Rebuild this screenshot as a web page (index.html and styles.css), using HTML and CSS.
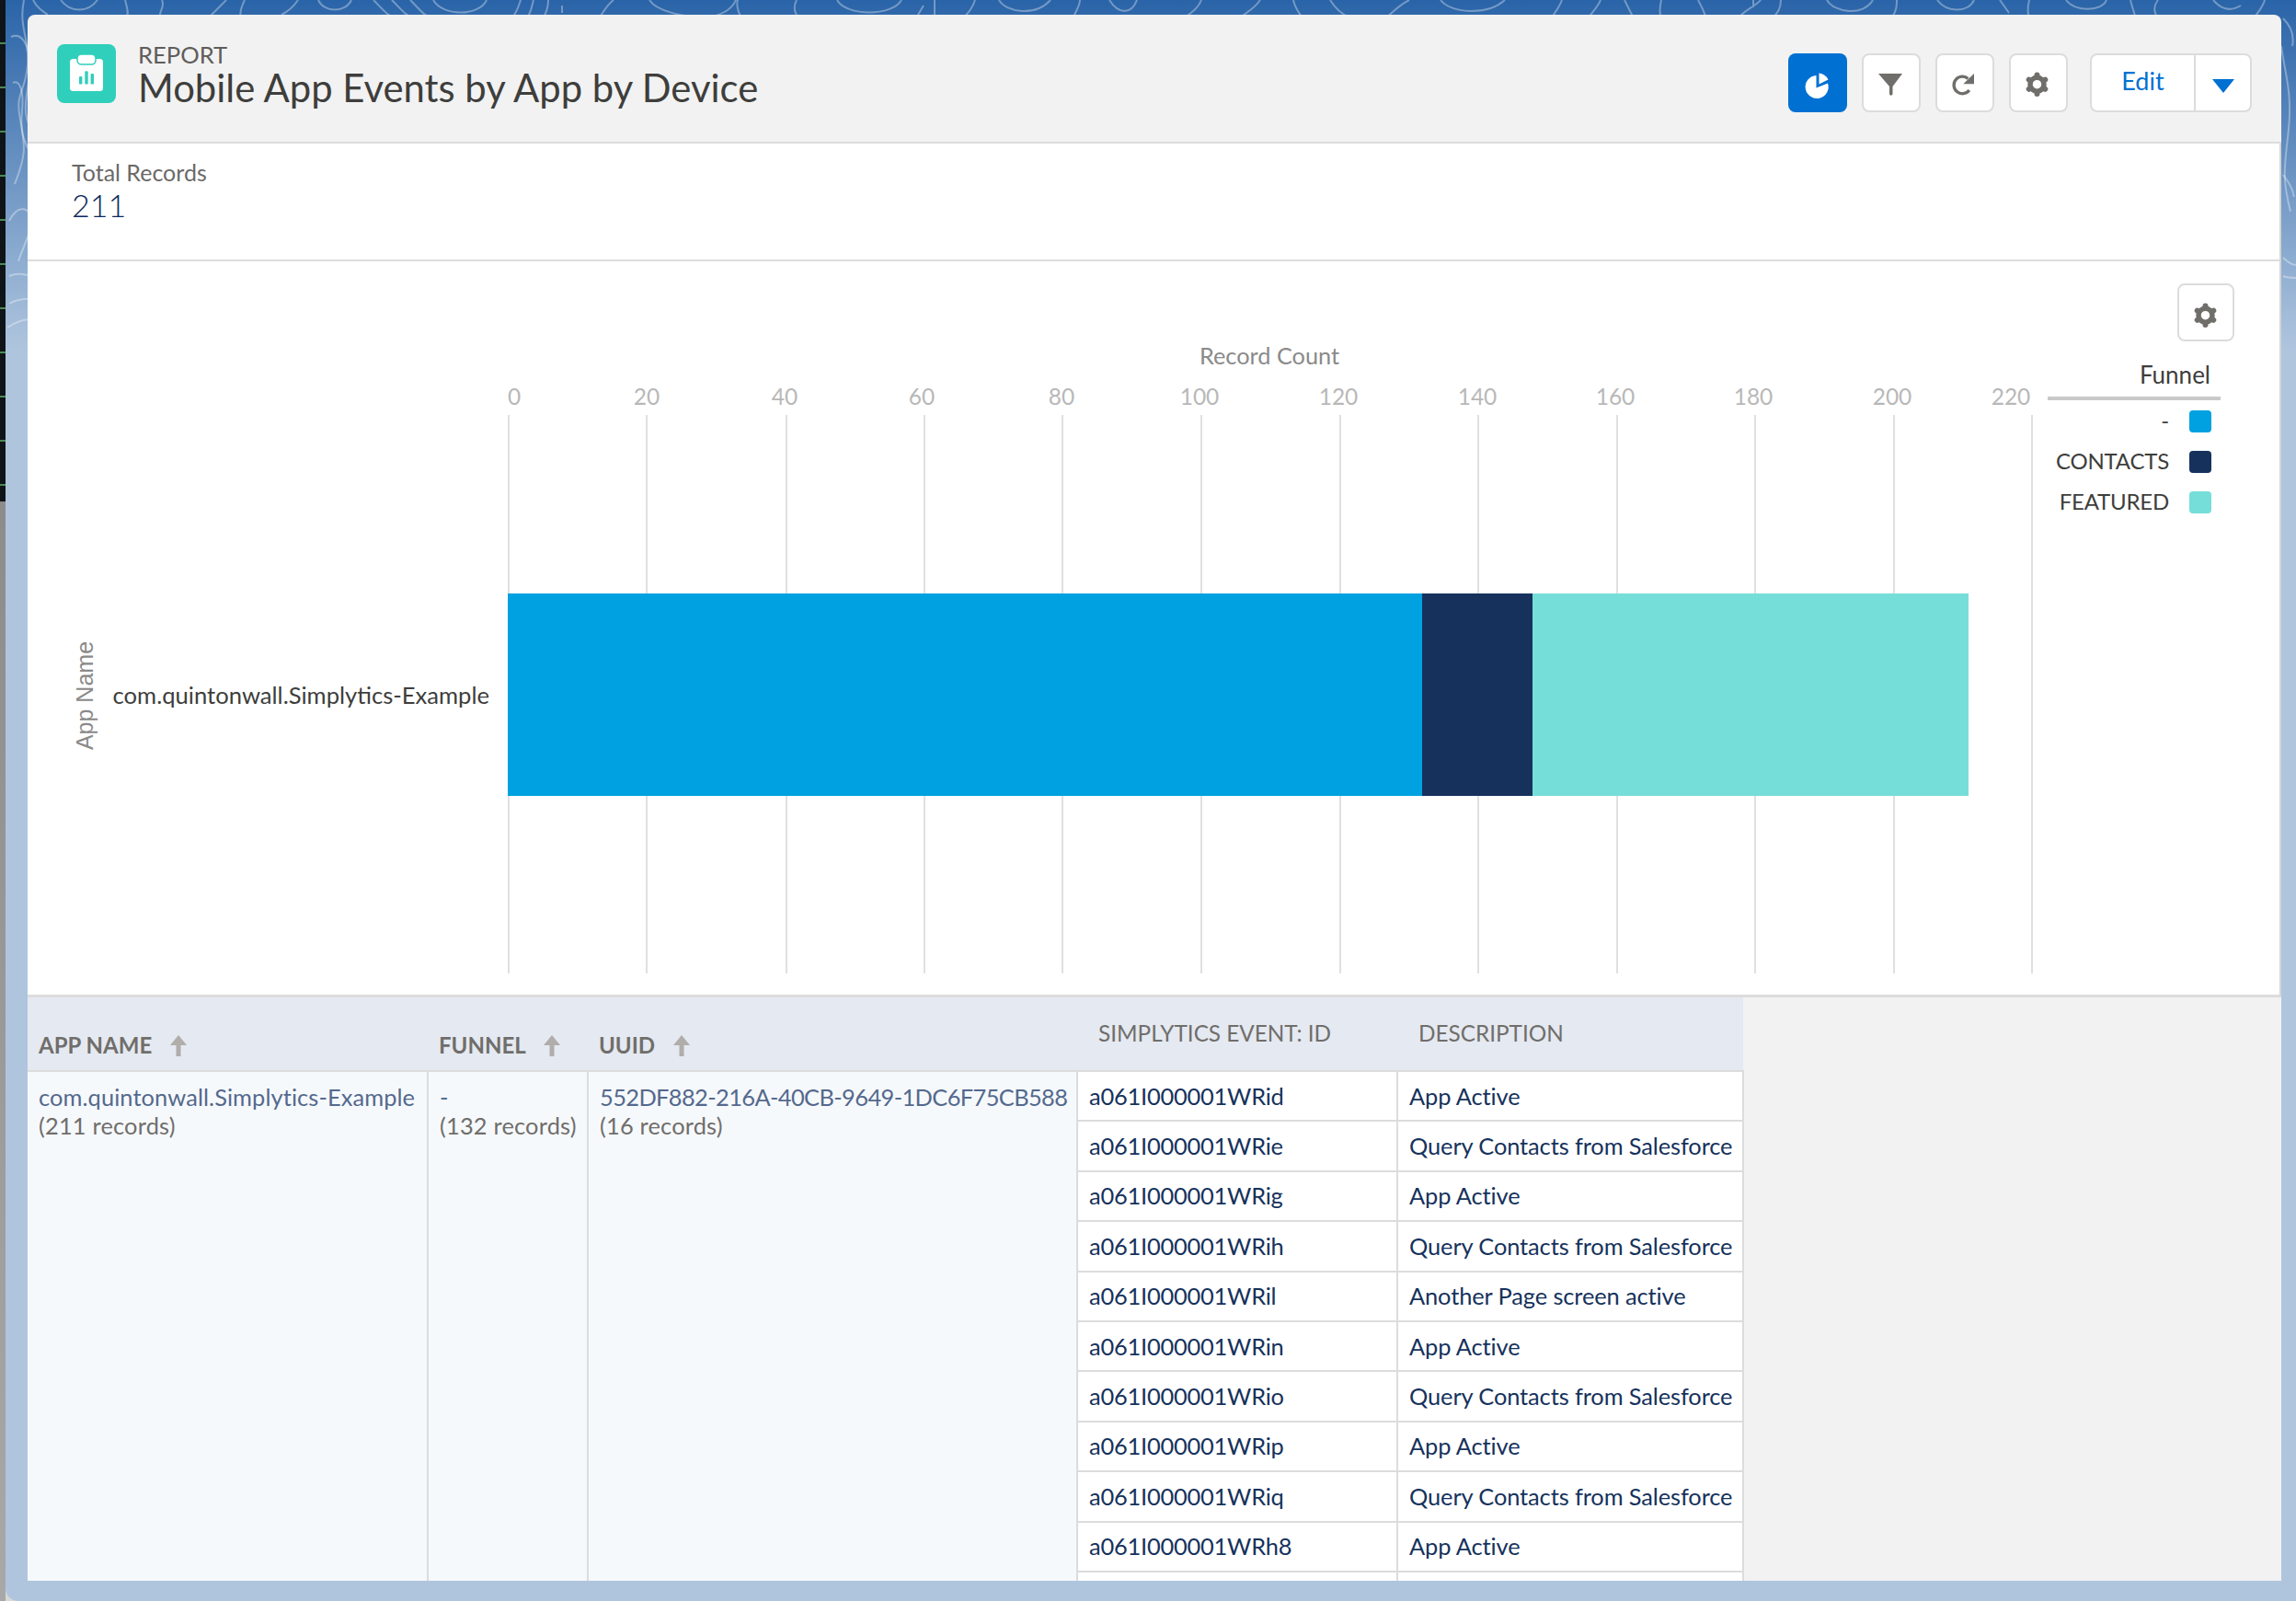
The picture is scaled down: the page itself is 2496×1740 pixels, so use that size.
FILE: index.html
```html
<!DOCTYPE html>
<html lang="en">
<head>
  <meta charset="UTF-8" />
  <title>Mobile App Events by App by Device</title>
  <link rel="stylesheet" href="styles.css">
</head>
<body>
  <div class="dock"></div>
  <div class="window">
    <svg class="contours" viewBox="0 0 2490 400" width="2490" height="400" fill="none" stroke="#fff" stroke-opacity=".34" stroke-width="2">
      <path d="M20 0c-6 30 6 40 4 70s-14 30-8 60 6 40-6 70"/>
      <path d="M6 40c14-6 22 14 20 40s-12 44 8 70"/>
      <path d="M8 90c8-4 12 10 10 30s0 30 8 44"/>
      <path d="M4 240c10-20 24-14 24 0s-10 30-14 44"/>
      <path d="M4 300c14-6 24 2 30 0M4 330c14-8 24-4 30-6M2 356c12-8 22-10 30-8"/>
      <path d="M30 0c4 8 10 12 16 16M60 0c10 14 30 14 40 0M130 0c2 8 4 12 2 20M170 0c4 8-4 12-2 20M220 20 240 0M260 0c-4 8-6 14-4 20M300 16c8-4 14-10 18-16M340 0c6 14 30 14 36 0"/>
      <path d="M400 0c10 10 16 18 22 18M420 0c10 10 16 18 22 18M440 0c10 10 16 18 20 18"/>
      <path d="M465 0c10 18 50 18 58 0M550 20c6-6 8-14 10-20M566 20c6-6 6-14 8-20M584 20c4-6 6-14 6-20M605 6v8"/>
      <path d="M645 20c6-8 8-14 16-20M700 0c10 16 50 18 60 20M760 20c20-4 30-10 34-20M800 20c-4-8-6-14-4-20"/>
      <path d="M860 16c-4-6-2-12 0-16M904 0c10 18 60 18 70 0M992 16l6-10M1010 0v20M1040 20c8-6 12-14 14-20M1080 0c8 14 40 18 56 0M1160 20c4-8 8-14 8-20"/>
      <path d="M1200 0c10 16 24 16 30 0M1280 20c10-6 18-14 20-20M1340 20c10-6 20-14 24-20M1400 0c2 10 8 16 10 20M1440 0c6 10 14 16 22 20"/>
      <path d="M1500 20c10-8 14-14 26-20M1560 0c10 14 50 18 70 0M1680 20c6-8 10-14 12-20M1720 20c6-8 12-14 14-20M1760 0l10 20M1800 0c-2 10-2 14 0 20M1840 0c4 8 8 14 8 20"/>
      <path d="M1884 20c4-8 20-14 24-20M1900 0v8M1920 20c8-6 10-14 10-20M1980 0c8 14 40 18 50 0M2050 20c6-8 6-14 6-20"/>
      <path d="M2100 0c10 14 34 14 40 0M2168 0l10 14M2200 0c-2 8-2 14 0 20M2240 0c10 14 40 12 44 0M2310 0c2 8 4 14 6 20M2340 0c-6 8-4 14 0 20M2400 0c10 12 20 12 30 6M2444 20c4-6 10-12 12-20"/>
      <path d="M2474 50c4 30 12 50 8 90s-8 50 2 90"/>
      <path d="M2476 20c10 10 12 20 10 30M2476 190c6 8 10 14 12 24M2476 280c4 4 10 8 14 8M2476 300c4 2 10 2 14 2"/>
    </svg>

    <main class="card">
      <header class="page-head">
        <div class="head-title">
          <svg class="report-icon" viewBox="0 0 64 64" width="64" height="64">
            <rect width="64" height="64" rx="8" fill="#2fcfbb"/>
            <rect x="14" y="16" width="36" height="35" rx="3.5" fill="#fff"/>
            <rect x="22" y="11" width="20" height="11" rx="4.5" fill="#fff" stroke="#2fcfbb" stroke-width="1.5"/>
            <rect x="24" y="35" width="3.4" height="8.6" rx="1.2" fill="#2fcfbb"/>
            <rect x="30.3" y="29.3" width="3.4" height="14.3" rx="1.2" fill="#2fcfbb"/>
            <rect x="36.6" y="32" width="3.4" height="11.6" rx="1.2" fill="#2fcfbb"/>
          </svg>
          <div>
            <div class="eyebrow">REPORT</div>
            <h1>Mobile App Events by App by Device</h1>
          </div>
        </div>
        <div class="head-actions">
          <button class="icon-btn active">
            <svg viewBox="0 0 64 64" width="64" height="64" fill="#fff">
              <path d="M30.5 24V37.5L43 32.5A12.5 12.5 0 1 1 30.5 24Z"/>
              <path d="M33.5 21.5A13 13 0 0 1 43.5 28.5L33.5 33.5Z"/>
            </svg>
          </button>
          <button class="icon-btn">
            <svg viewBox="2 2 60 60" width="60" height="60" fill="#706e6b">
              <path d="M18 22H44L33.5 36V44a1.5 1.5 0 0 1-3.5 0V36Z"/>
            </svg>
          </button>
          <button class="icon-btn">
            <svg viewBox="2 2 60 60" width="60" height="60">
              <path d="M36.8 40.1A9.3 9.3 0 1 1 35.5 27.5" fill="none" stroke="#706e6b" stroke-width="3.3"/>
              <path d="M42 22V33.3H30.3Z" fill="#706e6b"/>
            </svg>
          </button>
          <button class="icon-btn">
            <svg viewBox="2 2 60 60" width="60" height="60"><use href="#gear" x="0" y="0" width="64" height="64"/></svg>
          </button>
          <div class="split-btn">
            <button class="edit-btn">Edit</button>
            <button class="caret-btn">
              <svg viewBox="0 0 24 16" width="24" height="16"><path d="M0 0H24L12 15Z" fill="#0070d2"/></svg>
            </button>
          </div>
        </div>
      </header>

      <section class="stats">
        <div class="stat-label">Total Records</div>
        <div class="stat-value">211</div>
      </section>

      <section class="chart">
        <svg class="plot" viewBox="30 284 2190 796" width="2190" height="796">
          <g stroke="#e0e0e0" stroke-width="2">
            <path d="M553 451V1058M703 451V1058M855 451V1058M1005 451V1058M1155 451V1058M1306 451V1058M1457 451V1058M1607 451V1058M1758 451V1058M1908 451V1058M2059 451V1058M2209 451V1058"/>
          </g>
          <rect x="552" y="645" width="994" height="220" fill="#00a1e0"/>
          <rect x="1546" y="645" width="120" height="220" fill="#16325c"/>
          <rect x="1666" y="645" width="474" height="220" fill="#76ded9"/>
          <text class="axis-title" x="1380" y="396">Record Count</text>
          <g class="tick">
            <text x="559" y="440">0</text>
            <text x="703" y="440">20</text>
            <text x="853" y="440">40</text>
            <text x="1002" y="440">60</text>
            <text x="1154" y="440">80</text>
            <text x="1304" y="440">100</text>
            <text x="1455" y="440">120</text>
            <text x="1606" y="440">140</text>
            <text x="1756" y="440">160</text>
            <text x="1906" y="440">180</text>
            <text x="2057" y="440">200</text>
            <text x="2186" y="440">220</text>
          </g>
          <text class="cat-title" transform="translate(101 756) rotate(-90)">App Name</text>
          <text class="cat-label" x="532" y="765">com.quintonwall.Simplytics-Example</text>
        </svg>
        <aside class="chart-side">
          <button class="icon-btn chart-gear">
            <svg viewBox="2 2 58 58" width="58" height="58"><use href="#gear" x="0" y="0" width="64" height="64"/></svg>
          </button>
          <div class="legend-title">Funnel</div>
          <ul class="legend">
            <li>- <span class="swatch swatch-none"></span></li>
            <li>CONTACTS <span class="swatch swatch-contacts"></span></li>
            <li>FEATURED <span class="swatch swatch-featured"></span></li>
          </ul>
        </aside>
      </section>

      <section class="results">
        <table>
          <colgroup>
            <col class="c-app"><col class="c-funnel"><col class="c-uuid"><col class="c-id"><col class="c-desc">
          </colgroup>
          <thead>
            <tr>
              <th class="group">APP NAME <svg class="sort" viewBox="0 0 18 23" width="18" height="23"><path d="M9 0 18 11H11.5V23H6.5V11H0Z"/></svg></th>
              <th class="group">FUNNEL <svg class="sort" viewBox="0 0 18 23" width="18" height="23"><path d="M9 0 18 11H11.5V23H6.5V11H0Z"/></svg></th>
              <th class="group">UUID <svg class="sort" viewBox="0 0 18 23" width="18" height="23"><path d="M9 0 18 11H11.5V23H6.5V11H0Z"/></svg></th>
              <th class="plain">SIMPLYTICS EVENT: ID</th>
              <th class="plain">DESCRIPTION</th>
            </tr>
          </thead>
          <tbody>
            <tr>
              <td class="group-cell" rowspan="11"><a href="#">com.quintonwall.Simplytics-Example</a><br><span>(211 records)</span></td>
              <td class="group-cell" rowspan="11"><a href="#">-</a><br><span>(132 records)</span></td>
              <td class="group-cell" rowspan="11"><a class="uuid" href="#">552DF882-216A-40CB-9649-1DC6F75CB588</a><br><span>(16 records)</span></td>
              <td class="event-id">a061I000001WRid</td><td>App Active</td>
            </tr>
            <tr><td class="event-id">a061I000001WRie</td><td>Query Contacts from Salesforce</td></tr>
            <tr><td class="event-id">a061I000001WRig</td><td>App Active</td></tr>
            <tr><td class="event-id">a061I000001WRih</td><td>Query Contacts from Salesforce</td></tr>
            <tr><td class="event-id">a061I000001WRil</td><td>Another Page screen active</td></tr>
            <tr><td class="event-id">a061I000001WRin</td><td>App Active</td></tr>
            <tr><td class="event-id">a061I000001WRio</td><td>Query Contacts from Salesforce</td></tr>
            <tr><td class="event-id">a061I000001WRip</td><td>App Active</td></tr>
            <tr><td class="event-id">a061I000001WRiq</td><td>Query Contacts from Salesforce</td></tr>
            <tr><td class="event-id">a061I000001WRh8</td><td>App Active</td></tr>
            <tr><td>&nbsp;</td><td>&nbsp;</td></tr>
          </tbody>
        </table>
      </section>
    </main>
  </div>

  <svg class="defs" width="0" height="0">
    <symbol id="gear" viewBox="0 0 64 64">
      <g fill="none" stroke="#706e6b">
        <circle cx="30.5" cy="33.7" r="7.5" stroke-width="5.5"/>
        <g stroke-width="6" stroke-linecap="round">
          <path d="M30.5 24V23.5M30.5 43.4V43.9M22.1 28.9 21.7 28.6M38.9 38.5 39.3 38.8M38.9 28.9 39.3 28.6M22.1 38.5 21.7 38.8"/>
        </g>
      </g>
    </symbol>
  </svg>
</body>
</html>
```

FILE: styles.css
```css
* {
  box-sizing: border-box;
}
html, body {
  margin: 0;
  height: 1740px;
  overflow: hidden;
}
body {
  display: flex;
  background-color: #d8d8d8;
  color: #16325c;
  font-family: Lato, "Open Sans", sans-serif;
  font-size: 25.4px;
}
button {
  font-family: inherit;
  padding: 0;
  cursor: pointer;
}
.defs {
  position: absolute;
}

/* what shows of the other window on the left */
.dock {
  width: 6px;
  flex: none;
  background:
    linear-gradient(#0000 545px, #8c8c8c 545px, #a8a8a8),
    repeating-linear-gradient(#0f1418 0 46px, #4c8a55 46px 48px);
}

.window {
  position: relative;
  flex: 1;
  padding: 16px 16px 22px 24px;
  border-bottom-left-radius: 14px;
  background: linear-gradient(#2a64a8, #afc5de 380px);
  overflow: hidden;
}
.contours {
  position: absolute;
  top: 0;
  left: 0;
}

.card {
  position: relative;
  height: 1702px;
  border-radius: 8px 8px 0 0;
  background-color: #f2f2f2;
  overflow: hidden;
}

/* header */
.page-head {
  display: flex;
  justify-content: space-between;
  height: 140px;
  padding: 32px 32px 0;
  border-bottom: 2px solid #dcdcdc;
}
.head-title {
  display: flex;
  gap: 24px;
}
.report-icon {
  display: block;
}
.eyebrow {
  margin-top: -2px;
  font-size: 25.6px;
  line-height: 26px;
  color: #5f5d5b;
}
h1 {
  margin: 0;
  font-size: 41.8px;
  font-weight: 400;
  line-height: 46px;
  color: #3e3e3c;
}
.head-actions {
  display: flex;
  gap: 16px;
  margin-top: 10px;
}
.icon-btn {
  display: flex;
  align-items: center;
  justify-content: center;
  width: 64px;
  height: 64px;
  border: 2px solid #dcdcdc;
  border-radius: 8px;
  background-color: #fff;
}
.icon-btn.active {
  border: 0;
  background-color: #0070d2;
}
.split-btn {
  display: flex;
  margin-left: 8px;
  height: 64px;
  border: 2px solid #dcdcdc;
  border-radius: 8px;
  background-color: #fff;
  overflow: hidden;
}
.edit-btn {
  width: 111px;
  border: 0;
  background: none;
  padding-bottom: 6px;
  font-size: 27px;
  color: #0070d2;
}
.caret-btn {
  width: 61px;
  border: 0;
  border-left: 2px solid #dcdcdc;
  background: none;
  padding-top: 10px;
}

/* total */
.stats {
  height: 128px;
  padding: 16px 48px 0;
  background-color: #fff;
  border-right: 2px solid #d4d4d4;
  border-bottom: 2px solid #dcdcdc;
}
.stat-label {
  font-size: 25px;
  line-height: 30px;
  color: #6b6967;
}
.stat-value {
  font-size: 34px;
  line-height: 42px;
  font-weight: 300;
  color: #0b2a5b;
}

/* chart */
.chart {
  display: flex;
  height: 800px;
  background-color: #fff;
  border-right: 2px solid #d4d4d4;
  border-bottom: 3px solid #dcdcdc;
}
.plot {
  display: block;
  flex: none;
}
.plot text {
  font-family: Lato, sans-serif;
}
.axis-title {
  font-size: 25.3px;
  fill: #8a8a8a;
  text-anchor: middle;
}
.tick text {
  font-size: 24.5px;
  fill: #b8b8b8;
  text-anchor: middle;
}
.plot .cat-title {
  font-family: "Liberation Sans", sans-serif;
  font-size: 25px;
  fill: #8a8a8a;
  text-anchor: middle;
}
.cat-label {
  font-size: 25.6px;
  fill: #3e3e3c;
  text-anchor: end;
}
.chart-side {
  flex: 1;
  padding-top: 24px;
}
.chart-gear {
  width: 62px;
  height: 63px;
  margin-left: 147px;
}
.legend-title {
  margin-top: 21px;
  padding-right: 75px;
  text-align: right;
  font-size: 26px;
  line-height: 30px;
  color: #3e3e3c;
}
.legend {
  margin: 9px 64px 0 6px;
  padding: 9px 0 0;
  border-top: 4px solid #c9c9c9;
  list-style: none;
  font-size: 24px;
  letter-spacing: -.2px;
  color: #3e3e3c;
}
.legend li {
  display: flex;
  align-items: center;
  justify-content: flex-end;
  gap: 22px;
  height: 24px;
  margin: 0 10px 20px 0;
}
.swatch {
  width: 24px;
  height: 24px;
  margin-top: 4px;
  border-radius: 4px;
}
.swatch-none {
  background-color: #00a1e0;
}
.swatch-contacts {
  background-color: #16325c;
}
.swatch-featured {
  background-color: #76ded9;
}

/* table */
.results {
  height: 640px;
}
table {
  width: 1865px;
  border-collapse: collapse;
  table-layout: fixed;
}
.c-app { width: 435px; }
.c-funnel { width: 174px; }
.c-uuid { width: 532px; }
.c-id { width: 348px; }
.c-desc { width: 376px; }
thead tr {
  height: 80px;
  background-color: #e5e9f1;
}
th {
  text-align: left;
  color: #706e6b;
  white-space: nowrap;
}
th.group {
  padding: 24px 12px 0;
  font-size: 24px;
  font-weight: 700;
}
th.plain {
  padding: 0 23px 2px;
  font-size: 24.3px;
  font-weight: 400;
}
.sort {
  margin-left: 14px;
  vertical-align: -3px;
  fill: #b0adab;
}
tbody tr {
  height: 54.4px;
}
td {
  padding: 0 12px;
  border: 2px solid #dcdcdc;
  background-color: #fff;
  line-height: 31px;
  letter-spacing: -.1px;
  white-space: nowrap;
}
td.event-id {
  letter-spacing: -.2px;
}
td.group-cell {
  padding-top: 12px;
  vertical-align: top;
  background-color: #f6f9fc;
  border-left: 2px solid #dcdcdc;
}
td.group-cell:first-child {
  border-left: 0;
}
td.group-cell a {
  color: #54698d;
  letter-spacing: .1px;
  text-decoration: none;
}
td.group-cell a.uuid {
  letter-spacing: -.6px;
}
td.group-cell span {
  color: #706e6b;
  letter-spacing: .2px;
}
```
